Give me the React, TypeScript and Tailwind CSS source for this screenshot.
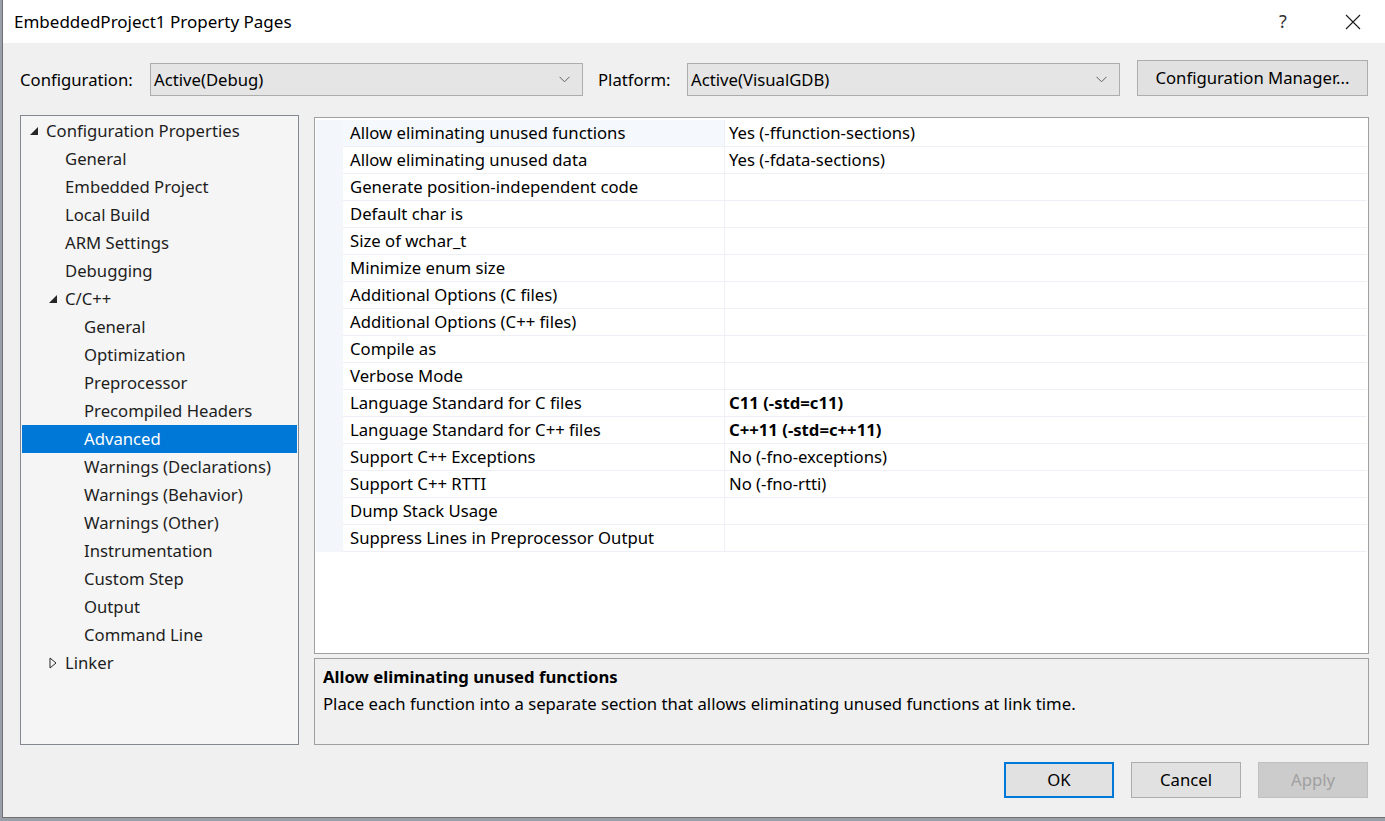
import React from 'react';

const font = { fontFamily: '"Noto Sans", "Open Sans", sans-serif' };

type TreeItem = { label: string; level: number; arrow?: 'open' | 'closed'; selected?: boolean };

const treeItems: TreeItem[] = [
  { label: 'Configuration Properties', level: 0, arrow: 'open' },
  { label: 'General', level: 1 },
  { label: 'Embedded Project', level: 1 },
  { label: 'Local Build', level: 1 },
  { label: 'ARM Settings', level: 1 },
  { label: 'Debugging', level: 1 },
  { label: 'C/C++', level: 1, arrow: 'open' },
  { label: 'General', level: 2 },
  { label: 'Optimization', level: 2 },
  { label: 'Preprocessor', level: 2 },
  { label: 'Precompiled Headers', level: 2 },
  { label: 'Advanced', level: 2, selected: true },
  { label: 'Warnings (Declarations)', level: 2 },
  { label: 'Warnings (Behavior)', level: 2 },
  { label: 'Warnings (Other)', level: 2 },
  { label: 'Instrumentation', level: 2 },
  { label: 'Custom Step', level: 2 },
  { label: 'Output', level: 2 },
  { label: 'Command Line', level: 2 },
  { label: 'Linker', level: 1, arrow: 'closed' },
];

type Prop = { name: string; value?: string; bold?: boolean };

const properties: Prop[] = [
  { name: 'Allow eliminating unused functions', value: 'Yes (-ffunction-sections)' },
  { name: 'Allow eliminating unused data', value: 'Yes (-fdata-sections)' },
  { name: 'Generate position-independent code' },
  { name: 'Default char is' },
  { name: 'Size of wchar_t' },
  { name: 'Minimize enum size' },
  { name: 'Additional Options (C files)' },
  { name: 'Additional Options (C++ files)' },
  { name: 'Compile as' },
  { name: 'Verbose Mode' },
  { name: 'Language Standard for C files', value: 'C11 (-std=c11)', bold: true },
  { name: 'Language Standard for C++ files', value: 'C++11 (-std=c++11)', bold: true },
  { name: 'Support C++ Exceptions', value: 'No (-fno-exceptions)' },
  { name: 'Support C++ RTTI', value: 'No (-fno-rtti)' },
  { name: 'Dump Stack Usage' },
  { name: 'Suppress Lines in Preprocessor Output' },
];

const Chevron = () => (
  <svg width="11" height="7" viewBox="0 0 11 7" className="shrink-0">
    <path d="M0.5 0.8 L5.5 5.8 L10.5 0.8" fill="none" stroke="#606060" strokeWidth="1" />
  </svg>
);

const Dropdown = ({ value, width }: { value: string; width: string }) => (
  <div className={`${width} flex h-[33px] items-center justify-between border border-[#adadad] bg-[#e5e5e5] pl-[3px] pr-[12px] text-black`}>
    <span>{value}</span>
    <Chevron />
  </div>
);

const Arrow = ({ kind, selected }: { kind: 'open' | 'closed'; selected?: boolean }) =>
  kind === 'open' ? (
    <svg width="10" height="10" viewBox="0 0 10 10" className="shrink-0">
      <path d="M9 1 L9 9 L1 9 Z" fill={selected ? '#fff' : '#262626'} />
    </svg>
  ) : (
    <svg width="10" height="12" viewBox="0 0 10 12" className="shrink-0">
      <path d="M2 1 L8 6 L2 11 Z" fill="none" stroke="#262626" strokeWidth="1" />
    </svg>
  );

const TreeRow = ({ item }: { item: TreeItem }) => {
  const indent = item.level === 0 ? 'pl-[7px]' : item.level === 1 ? 'pl-[26px]' : 'pl-[45px]';
  return (
    <div
      className={`flex h-[28px] items-center ${indent} ${
        item.selected ? 'bg-[#0078d7] text-white' : 'text-[#1e1e1e]'
      }`}
    >
      <span className="flex w-[17px] items-center">{item.arrow && <Arrow kind={item.arrow} selected={item.selected} />}</span>
      <span>{item.label}</span>
    </div>
  );
};

const PushButton = ({
  label,
  primary,
  disabled,
  className = '',
}: {
  label: string;
  primary?: boolean;
  disabled?: boolean;
  className?: string;
}) => (
  <button
    type="button"
    className={`flex h-[36px] items-center justify-center ${
      primary
        ? 'border-2 border-[#0078d7] bg-[#e1e1e1] text-black'
        : disabled
          ? 'border border-[#bfbfbf] bg-[#cccccc] text-[#a0a0a0]'
          : 'border border-[#adadad] bg-[#e1e1e1] text-black'
    } ${className}`}
  >
    {label}
  </button>
);

export default function App() {
  return (
    <div className="h-[821px] w-[1385px] overflow-hidden bg-[#9aa0aa] text-[16.7px]" style={font}>
      <div className="ml-[2px] flex h-[818px] flex-col border-l border-b border-[#707070] bg-[#f0f0f0]">
        {/* title bar */}
        <div className="flex h-[43px] shrink-0 items-center bg-white pl-[11px]">
          <span className="flex-1 text-[17px] text-black">EmbeddedProject1 Property Pages</span>
          <span className="w-[20px] text-center text-[18px] text-[#333]">?</span>
          <span className="ml-[50px] mr-[22px] flex w-[20px] items-center justify-center">
            <svg width="16" height="16" viewBox="0 0 16 16">
              <path d="M1 1 L15 15 M15 1 L1 15" stroke="#1a1a1a" strokeWidth="1.1" fill="none" />
            </svg>
          </span>
        </div>

        {/* configuration row */}
        <div className="mt-[17px] flex h-[36px] items-end pl-[17px] pr-[17px]">
          <div className="flex h-[33px] items-center text-black">
            <span className="w-[130px]">Configuration:</span>
            <Dropdown value="Active(Debug)" width="w-[433px]" />
            <span className="ml-[15px] w-[89px]">Platform:</span>
            <Dropdown value="Active(VisualGDB)" width="w-[433px]" />
          </div>
          <div className="flex-1" />
          <PushButton label="Configuration Manager..." className="w-[231px]" />
        </div>

        {/* main area */}
        <div className="mt-[19px] flex h-[630px] pl-[17px] pr-[16px]">
          <div className="h-[630px] w-[279px] border border-[#828790] bg-[#f5f5f5] pt-[1px] pl-[1px] pr-[1px]">
            {treeItems.map((item, i) => (
              <TreeRow key={i} item={item} />
            ))}
          </div>

          <div className="ml-[15px] flex flex-1 flex-col pt-[2px]">
            <div className="h-[538px] border border-[#a0a0a0] bg-white px-[1px] pt-[2px]">
              {properties.map((p, i) => (
                <div key={i} className="flex h-[27px] text-black">
                  <div className="w-[27px] shrink-0 bg-[#f3f6fb]" />
                  <div
                    className={`flex w-[382px] shrink-0 items-center border-b border-r border-[#eef0f6] pl-[7px] ${
                      i === 0 ? 'bg-[#f5f8fc]' : ''
                    }`}
                  >
                    {p.name}
                  </div>
                  <div className={`flex flex-1 items-center border-b border-[#eef0f6] pl-[4px] ${p.bold ? 'font-bold' : ''}`}>
                    {p.value}
                  </div>
                </div>
              ))}
            </div>
            <div className="mt-[4px] h-[87px] border border-[#a0a0a0] bg-[#f0f0f0] px-[8px] pt-[4px] text-black">
              <div className="h-[27px] font-bold leading-[27px]">Allow eliminating unused functions</div>
              <div className="h-[27px] leading-[27px]">
                Place each function into a separate section that allows eliminating unused functions at link time.
              </div>
            </div>
          </div>
        </div>

        {/* buttons */}
        <div className="mt-[17px] flex justify-end gap-[17px] pr-[17px]">
          <PushButton label="OK" primary className="w-[110px]" />
          <PushButton label="Cancel" className="w-[110px]" />
          <PushButton label="Apply" disabled className="w-[110px]" />
        </div>
      </div>
    </div>
  );
}
